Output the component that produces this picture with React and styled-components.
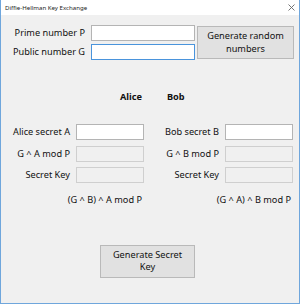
import React from "react";
import styled, { createGlobalStyle } from "styled-components";

const Global = createGlobalStyle`
  html, body { margin: 0; padding: 0; background: #f0f0f0; }
  * { box-sizing: border-box; }
`;

const Window = styled.div`
  width: 300px;
  height: 304px;
  display: flex;
  flex-direction: column;
  border: 1px solid #6fa6dc;
  border-top: none;
  background: #f0f0f0;
  font-family: "Noto Sans", "Open Sans", sans-serif;
  font-size: 9.2px;
  color: #111;
`;

const TitleBar = styled.div`
  height: 15px;
  background: #fff;
  display: flex;
  align-items: center;
  justify-content: space-between;
  padding: 0 4px 0 4px;
  font-size: 6.1px;
  color: #222;
  flex: none;
`;

const CloseIcon = () => (
  <svg width="7" height="7" viewBox="0 0 7 7">
    <path d="M0.5 0.5 L6.5 6.5 M6.5 0.5 L0.5 6.5" stroke="#666" strokeWidth="0.9" />
  </svg>
);

const Body = styled.div`
  flex: 1;
  display: flex;
  flex-direction: column;
  padding-top: 10px;
`;

const TopGrid = styled.div`
  display: grid;
  grid-template-columns: 84px 104px 97px;
  grid-template-rows: 16px 16px;
  column-gap: 6px;
  row-gap: 3px;
  align-items: center;
`;

const Label = styled.label`
  text-align: right;
  white-space: nowrap;
  line-height: 12px;
`;

const Input = styled.div`
  height: 16px;
  background: ${(p) => (p.$disabled ? "#f0f0f0" : "#fff")};
  border: 1px solid
    ${(p) => (p.$focused ? "#4a94dc" : p.$disabled ? "#cfcfcf" : "#b4b4b4")};
`;

const Button = styled.div`
  display: flex;
  align-items: center;
  justify-content: center;
  text-align: center;
  background: #e1e1e1;
  border: 1px solid #b9b9b9;
  line-height: 12.5px;
  width: ${(p) => p.$w}px;
  height: 33px;
  padding: 0 ${(p) => p.$px}px;
`;

const RandomButton = styled(Button)`
  grid-column: 3;
  grid-row: 1 / span 2;
  margin-left: -4px;
`;

const HeadRow = styled.div`
  display: grid;
  grid-template-columns: 149px 149px;
  margin-top: 31px;
  font-weight: 700;
  line-height: 12px;
`;

const Head = styled.div`
  text-align: ${(p) => p.$align};
  padding: ${(p) => p.$pad};
`;

const Panels = styled.div`
  display: grid;
  grid-template-columns: 149px 149px;
  margin-top: 21px;
`;

const Panel = styled.div`
  display: grid;
  grid-template-columns: 69px 68px;
  grid-auto-rows: 16px;
  column-gap: 6px;
  row-gap: 5.5px;
  align-items: center;
`;

const Formula = styled.div`
  grid-column: 1 / span 2;
  text-align: right;
  padding-right: 2px;
  margin-top: 6px;
  line-height: 12px;
  white-space: nowrap;
`;

const BottomRow = styled.div`
  display: flex;
  padding-left: 99px;
  margin-top: 40px;
`;

function PartyPanel({ name, letter, other }) {
  return (
    <Panel>
      <Label>{name} secret {letter}</Label>
      <Input />
      <Label>G ^ {letter} mod P</Label>
      <Input $disabled />
      <Label>Secret Key</Label>
      <Input $disabled />
      <Formula>(G ^ {other}) ^ {letter} mod P</Formula>
    </Panel>
  );
}

export default function App() {
  return (
    <>
      <Global />
      <Window>
        <TitleBar>
          <span>Diffie-Hellman Key Exchange</span>
          <CloseIcon />
        </TitleBar>
        <Body>
          <TopGrid>
            <Label>Prime number P</Label>
            <Input />
            <RandomButton $w={97} $px={3}>Generate random numbers</RandomButton>
            <Label>Public number G</Label>
            <Input $focused />
          </TopGrid>
          <HeadRow>
            <Head $align="right" $pad="0 8px 0 0">Alice</Head>
            <Head $align="left" $pad="0 0 0 17px">Bob</Head>
          </HeadRow>
          <Panels>
            <PartyPanel name="Alice" letter="A" other="B" />
            <PartyPanel name="Bob" letter="B" other="A" />
          </Panels>
          <BottomRow>
            <Button $w={95} $px={10}>Generate Secret Key</Button>
          </BottomRow>
        </Body>
      </Window>
    </>
  );
}
